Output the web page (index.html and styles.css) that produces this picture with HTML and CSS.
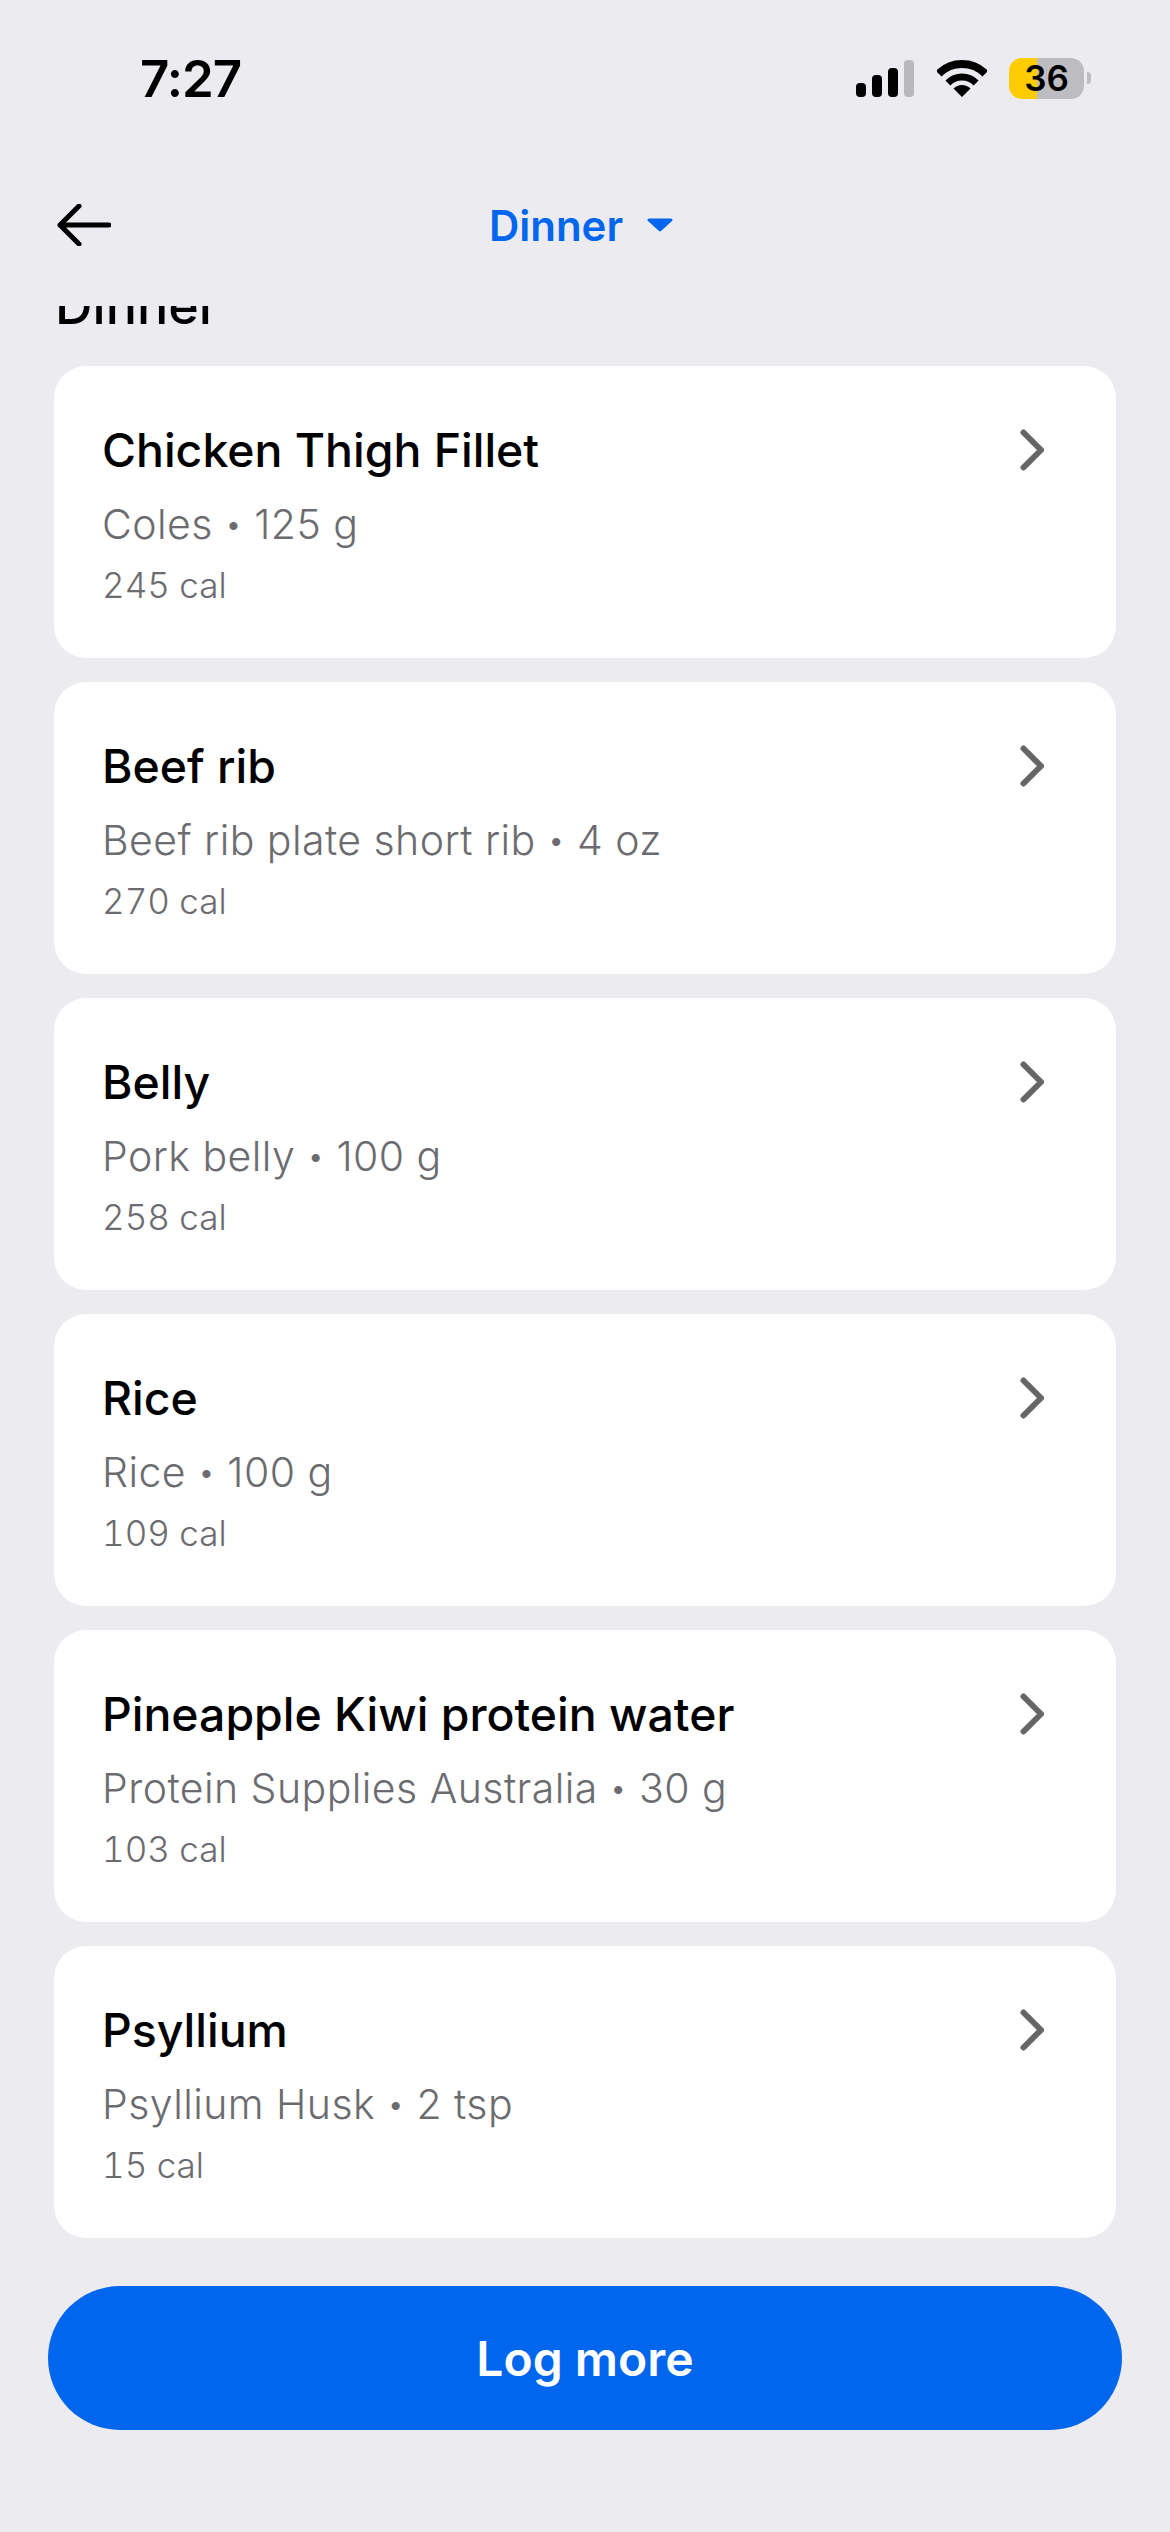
FILE: index.html
```html
<!DOCTYPE html>
<html lang="en">

<head>
    <meta charset="UTF-8">
    <meta name="viewport" content="width=device-width, initial-scale=1.0">
    <title>Dinner</title>
    <link rel="stylesheet" href="styles.css">
</head>

<body>
    <div class="status">
        <span class="time">7:27</span>
        <div class="status-icons">
            <div class="signal">
                <span class="bar bar-1"></span>
                <span class="bar bar-2"></span>
                <span class="bar bar-3"></span>
                <span class="bar bar-4"></span>
            </div>
            <svg class="wifi" width="50" height="37" viewBox="0 0 50 37">
                <path d="M1.7 13.7A33 33 0 0 1 48.3 13.7" fill="none" stroke="#000" stroke-width="8" />
                <path d="M10.9 22.9A20 20 0 0 1 39.1 22.9" fill="none" stroke="#000" stroke-width="7" />
                <path d="M25 37L16.5 28.5A12 12 0 0 1 33.5 28.5Z" fill="#000" />
            </svg>
            <div class="battery">
                <span class="battery-text">36</span>
            </div>
            <span class="battery-nub"></span>
        </div>
    </div>

    <div class="nav">
        <svg class="back" width="54" height="42" viewBox="0 0 54 42">
            <path d="M52 21H3M22 2L3 21L22 40" fill="none" stroke="#000" stroke-width="5" stroke-linecap="round" stroke-linejoin="round" />
        </svg>
        <div class="nav-title">
            <span>Dinner</span>
            <svg width="26" height="14" viewBox="0 0 26 14">
                <path d="M2 2H24L13 12Z" fill="#0066ee" stroke="#0066ee" stroke-width="3" stroke-linejoin="round" />
            </svg>
        </div>
    </div>

    <div class="scroll">
        <h2 class="section">Dinner</h2>
        <div class="list">
            <div class="card">
                <div class="card-text">
                    <div class="name">Chicken Thigh Fillet</div>
                    <div class="desc">Coles <span class="dot">•</span> 125 g</div>
                    <div class="cal">245 cal</div>
                </div>
                <svg class="chevron" width="24" height="42" viewBox="0 0 24 42">
                    <path d="M3.5 3.5L21 21L3.5 38.5" fill="none" stroke="#666668" stroke-width="6" stroke-linecap="round" stroke-linejoin="round" />
                </svg>
            </div>
            <div class="card">
                <div class="card-text">
                    <div class="name">Beef rib</div>
                    <div class="desc">Beef rib plate short rib <span class="dot">•</span> 4 oz</div>
                    <div class="cal">270 cal</div>
                </div>
                <svg class="chevron" width="24" height="42" viewBox="0 0 24 42">
                    <path d="M3.5 3.5L21 21L3.5 38.5" fill="none" stroke="#666668" stroke-width="6" stroke-linecap="round" stroke-linejoin="round" />
                </svg>
            </div>
            <div class="card">
                <div class="card-text">
                    <div class="name">Belly</div>
                    <div class="desc">Pork belly <span class="dot">•</span> 100 g</div>
                    <div class="cal">258 cal</div>
                </div>
                <svg class="chevron" width="24" height="42" viewBox="0 0 24 42">
                    <path d="M3.5 3.5L21 21L3.5 38.5" fill="none" stroke="#666668" stroke-width="6" stroke-linecap="round" stroke-linejoin="round" />
                </svg>
            </div>
            <div class="card">
                <div class="card-text">
                    <div class="name">Rice</div>
                    <div class="desc">Rice <span class="dot">•</span> 100 g</div>
                    <div class="cal">109 cal</div>
                </div>
                <svg class="chevron" width="24" height="42" viewBox="0 0 24 42">
                    <path d="M3.5 3.5L21 21L3.5 38.5" fill="none" stroke="#666668" stroke-width="6" stroke-linecap="round" stroke-linejoin="round" />
                </svg>
            </div>
            <div class="card">
                <div class="card-text">
                    <div class="name">Pineapple Kiwi protein water</div>
                    <div class="desc">Protein Supplies Australia <span class="dot">•</span> 30 g</div>
                    <div class="cal">103 cal</div>
                </div>
                <svg class="chevron" width="24" height="42" viewBox="0 0 24 42">
                    <path d="M3.5 3.5L21 21L3.5 38.5" fill="none" stroke="#666668" stroke-width="6" stroke-linecap="round" stroke-linejoin="round" />
                </svg>
            </div>
            <div class="card">
                <div class="card-text">
                    <div class="name">Psyllium</div>
                    <div class="desc">Psyllium Husk <span class="dot">•</span> 2 tsp</div>
                    <div class="cal">15 cal</div>
                </div>
                <svg class="chevron" width="24" height="42" viewBox="0 0 24 42">
                    <path d="M3.5 3.5L21 21L3.5 38.5" fill="none" stroke="#666668" stroke-width="6" stroke-linecap="round" stroke-linejoin="round" />
                </svg>
            </div>
        </div>
    </div>

    <button class="log-more">Log more</button>
</body>

</html>
```

FILE: styles.css
```css
* {
    margin: 0;
    box-sizing: border-box;
    padding: 0;
}

body {
    display: flex;
    flex-direction: column;
    width: 1170px;
    height: 2532px;
    overflow: hidden;
    font-family: Inter, "Liberation Sans", sans-serif;
    color: #000;
    background: #ebebf0;
}

.status {
    display: flex;
    flex: none;
    align-items: center;
    justify-content: space-between;
    height: 156px;
    padding: 0 79px 0 140px;
}

.time {
    font-size: 51px;
    font-weight: 600;
    letter-spacing: -1px;
}

.status-icons {
    display: flex;
    align-items: center;
}

.signal {
    display: flex;
    align-items: flex-end;
    gap: 6px;
    height: 37px;
}

.bar {
    width: 10px;
    border-radius: 4px;
    background: #000;
}

.bar-1 {
    height: 14px;
}

.bar-2 {
    height: 22px;
}

.bar-3 {
    height: 29px;
}

.bar-4 {
    height: 37px;
    background: #b9b9bd;
}

.wifi {
    margin-left: 23px;
}

.battery {
    display: flex;
    align-items: center;
    justify-content: center;
    width: 75px;
    height: 41px;
    margin-left: 22px;
    border-radius: 13px;
    background: linear-gradient(to right, #ffcc00 28px, #bdbdc1 28px);
}

.battery-text {
    font-size: 35px;
    font-weight: 600;
}

.battery-nub {
    width: 4px;
    height: 12px;
    margin-left: 3px;
    border-radius: 0 6px 6px 0;
    background: #bdbdc1;
}

.nav {
    display: grid;
    flex: none;
    grid-template-columns: 1fr auto 1fr;
    align-items: center;
    height: 138px;
    margin-bottom: 12px;
    padding: 0 65px 0 57px;
}

.nav-title {
    display: flex;
    align-items: center;
    gap: 24px;
    font-size: 42px;
    font-weight: 600;
    color: #0066ee;
}

.scroll {
    flex: none;
    height: 1932px;
    padding: 0 54px;
    overflow: hidden;
}

.section {
    height: 60px;
    margin-top: -30px;
    margin-bottom: 30px;
    margin-left: 1px;
    font-size: 52px;
    font-weight: 500;
    line-height: 60px;
}

.list {
    display: flex;
    flex-direction: column;
    gap: 24px;
}

.card {
    display: flex;
    align-items: flex-start;
    justify-content: space-between;
    height: 292px;
    padding: 56px 72px 0 48px;
    border-radius: 32px;
    background: #fff;
}

.name {
    font-size: 46.4px;
    font-weight: 470;
    line-height: 56px;
    color: #000;
}

.desc {
    margin-top: 22px;
    font-size: 41px;
    font-weight: 350;
    letter-spacing: 0.45px;
    line-height: 48px;
    color: #6c6c70;
}

.dot {
    font-size: 30px;
    line-height: 1;
    vertical-align: 4px;
}

.cal {
    margin-top: 15px;
    font-size: 35px;
    font-weight: 350;
    font-feature-settings: "tnum";
    line-height: 44px;
    color: #6c6c70;
}

.chevron {
    margin-top: 7px;
}

.log-more {
    flex: none;
    width: 1074px;
    height: 144px;
    margin: 48px 0 0 48px;
    border: 0;
    border-radius: 72px;
    font-family: inherit;
    font-size: 48px;
    font-weight: 600;
    color: #fff;
    background: #0066ee;
}
```
